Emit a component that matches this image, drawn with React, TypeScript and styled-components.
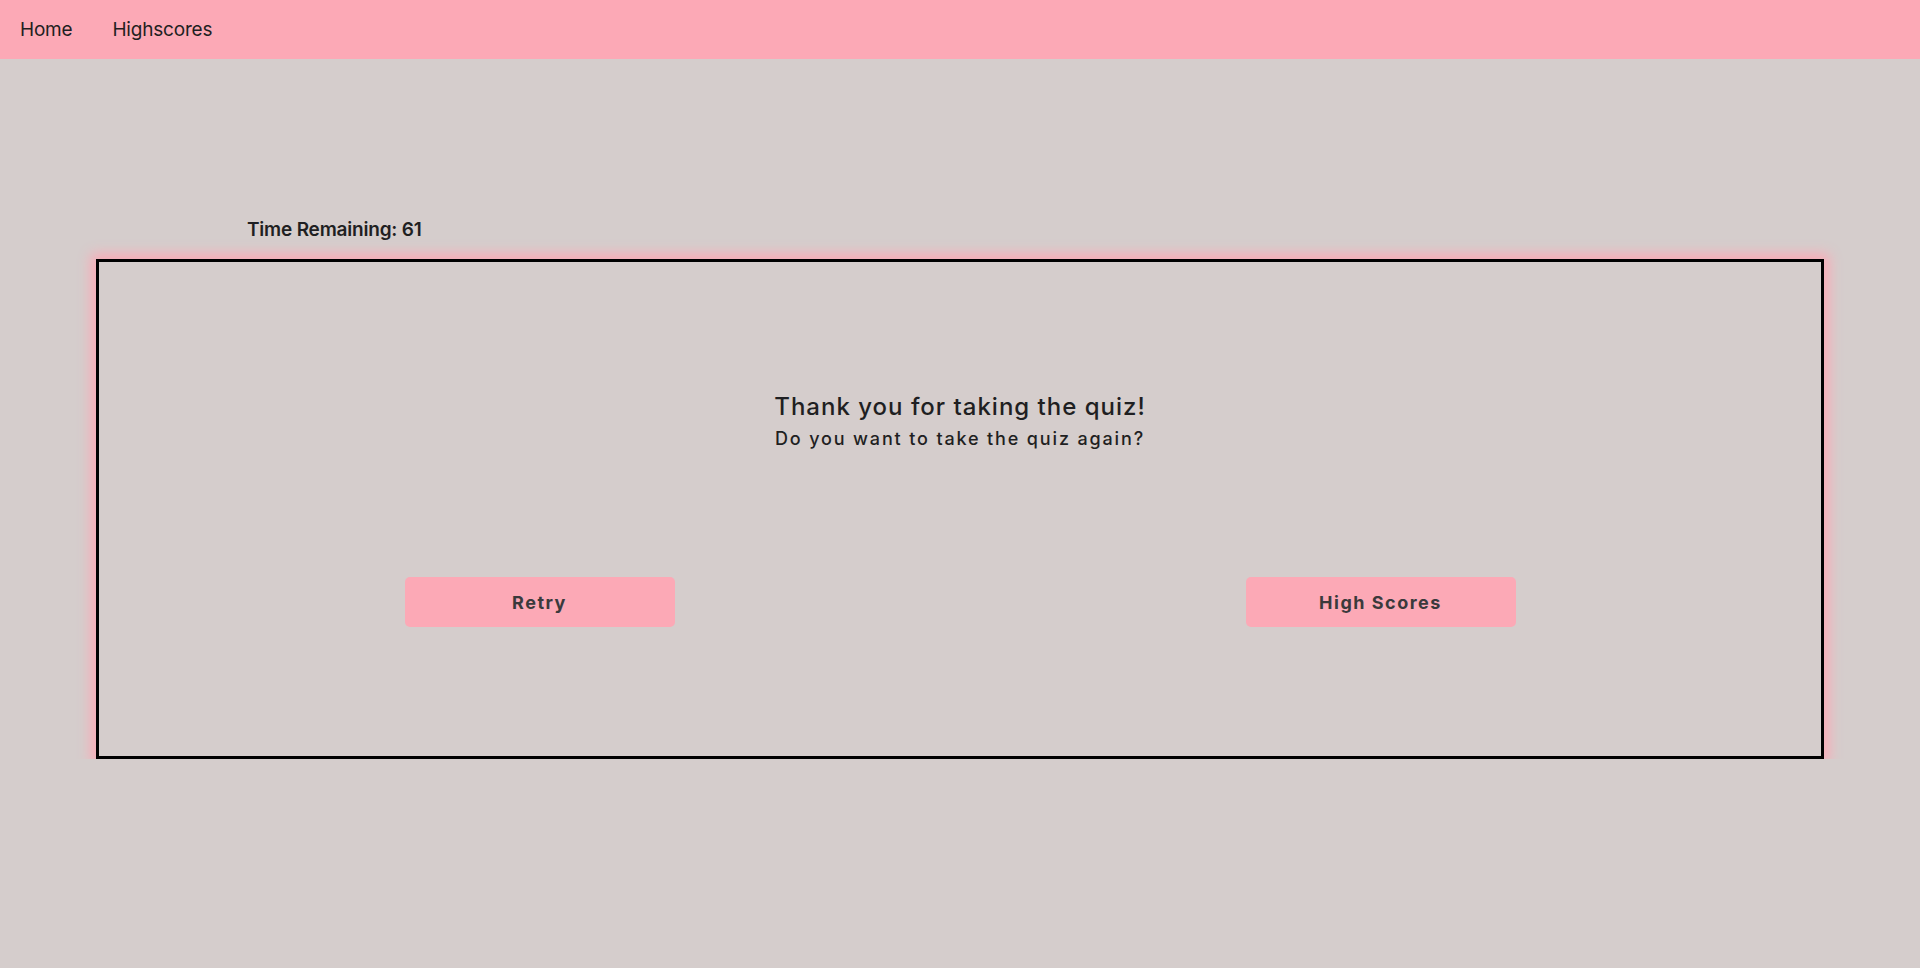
import React from "react";
import styled, { createGlobalStyle } from "styled-components";

const GlobalStyle = createGlobalStyle`
  html, body {
    margin: 0;
    padding: 0;
    background: #d5cdcc;
    font-family: Inter, "Noto Sans", sans-serif;
    color: #1f1f22;
  }
  * { box-sizing: border-box; }
`;

const NavBar = styled.nav`
  height: 59px;
  background: #fca9b6;
  display: flex;
  align-items: center;
`;

const NavLink = styled.a`
  padding: 0 20px;
  font-size: 19px;
  letter-spacing: -0.2px;
  color: #1f1f22;
  text-decoration: none;
  cursor: pointer;
`;

const Main = styled.main`
  padding-top: 159px;
`;

const TimeLabel = styled.div`
  margin-left: 247px;
  font-size: 19px;
  letter-spacing: -0.2px;
  font-weight: 600;
  line-height: 24px;
  margin-bottom: 17px;
`;

const QuizBox = styled.section`
  margin: 0 auto;
  width: 90%;
  height: 500px;
  border: 3px solid #000;
  box-shadow: 0 0 12px 5px #fca9b6;
  padding: 20px;
  display: flex;
  flex-direction: column;
`;

const Message = styled.div`
  margin-top: 110px;
  text-align: center;
`;

const Title = styled.h2`
  margin: 0;
  font-size: 24px;
  font-weight: 500;
  letter-spacing: 1px;
  line-height: 29px;
`;

const Subtitle = styled.p`
  margin: 7px 0 0;
  font-size: 18px;
  font-weight: 500;
  letter-spacing: 1.85px;
  line-height: 22px;
`;

const ButtonRow = styled.div`
  margin-top: 127px;
  display: flex;
  justify-content: space-around;
`;

const ActionButton = styled.button`
  width: 270px;
  height: 50px;
  border: none;
  border-radius: 5px;
  background: #fca9b6;
  color: #3a3a3c;
  font-family: Inter, "Noto Sans", sans-serif;
  font-size: 18px;
  font-weight: 700;
  letter-spacing: 1.5px;
  cursor: pointer;
`;

export default function App() {
  return (
    <>
      <GlobalStyle />
      <NavBar>
        <NavLink>Home</NavLink>
        <NavLink>Highscores</NavLink>
      </NavBar>
      <Main>
        <TimeLabel>Time Remaining: 61</TimeLabel>
        <QuizBox>
          <Message>
            <Title>Thank you for taking the quiz!</Title>
            <Subtitle>Do you want to take the quiz again?</Subtitle>
          </Message>
          <ButtonRow>
            <ActionButton>Retry</ActionButton>
            <ActionButton>High Scores</ActionButton>
          </ButtonRow>
        </QuizBox>
      </Main>
    </>
  );
}
